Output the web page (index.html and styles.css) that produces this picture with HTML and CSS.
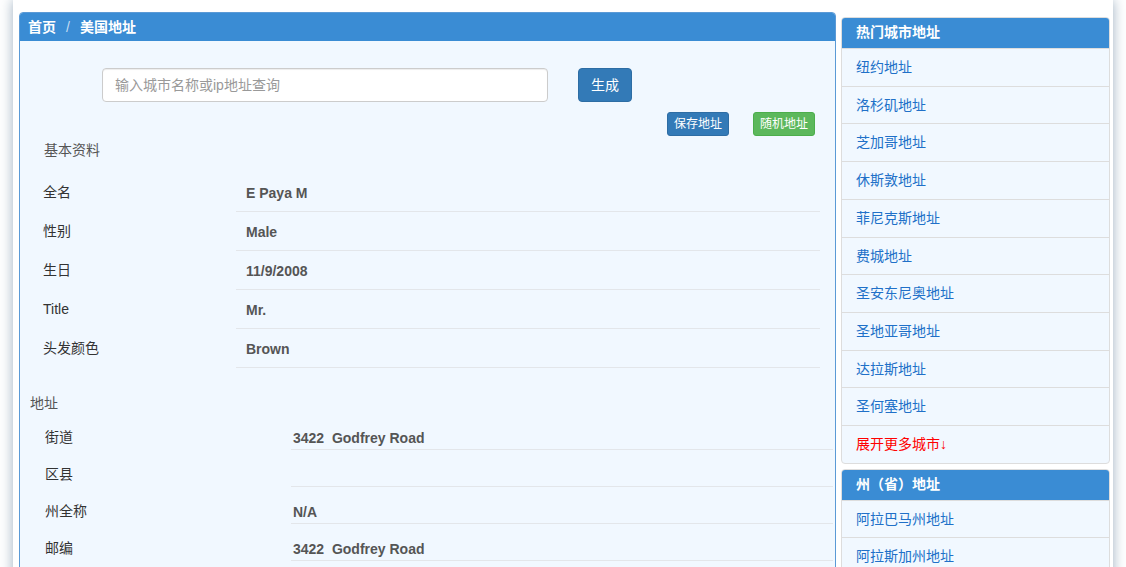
FILE: index.html
```html
<!DOCTYPE html>
<html lang="zh-CN">
<head>
<meta charset="utf-8">
<title>美国地址</title>
<link rel="stylesheet" href="styles.css">
</head>
<body>
<div class="page">
  <div class="main">
    <div class="panel">
      <div class="panel-head">
        <span class="crumb">首页</span><span class="sep">/</span><span class="crumb">美国地址</span>
      </div>
      <div class="panel-body">
        <div class="search-row">
          <input class="search-input" type="text" placeholder="输入城市名称或ip地址查询">
          <button class="btn btn-primary">生成</button>
        </div>
        <div class="action-row">
          <button class="btn-xs btn-blue">保存地址</button>
          <button class="btn-xs btn-green">随机地址</button>
        </div>
        <div class="section-title">基本资料</div>
        <div class="info-table">
          <div class="info-label">全名</div><div class="info-value">E Paya M</div>
          <div class="info-label">性别</div><div class="info-value">Male</div>
          <div class="info-label">生日</div><div class="info-value">11/9/2008</div>
          <div class="info-label">Title</div><div class="info-value">Mr.</div>
          <div class="info-label">头发颜色</div><div class="info-value">Brown</div>
        </div>
        <div class="section-title addr-title">地址</div>
        <div class="addr-table">
          <div class="addr-label">街道</div><div class="addr-value">3422&nbsp; Godfrey Road</div>
          <div class="addr-label">区县</div><div class="addr-value"></div>
          <div class="addr-label">州全称</div><div class="addr-value">N/A</div>
          <div class="addr-label">邮编</div><div class="addr-value">3422&nbsp; Godfrey Road</div>
        </div>
      </div>
    </div>
  </div>
  <div class="side">
    <div class="side-panel">
      <div class="side-head">热门城市地址</div>
      <ul class="side-list">
        <li><a href="#">纽约地址</a></li>
        <li><a href="#">洛杉矶地址</a></li>
        <li><a href="#">芝加哥地址</a></li>
        <li><a href="#">休斯敦地址</a></li>
        <li><a href="#">菲尼克斯地址</a></li>
        <li><a href="#">费城地址</a></li>
        <li><a href="#">圣安东尼奥地址</a></li>
        <li><a href="#">圣地亚哥地址</a></li>
        <li><a href="#">达拉斯地址</a></li>
        <li><a href="#">圣何塞地址</a></li>
        <li><a href="#" class="more">展开更多城市↓</a></li>
      </ul>
    </div>
    <div class="side-panel">
      <div class="side-head">州（省）地址</div>
      <ul class="side-list">
        <li><a href="#">阿拉巴马州地址</a></li>
        <li><a href="#">阿拉斯加州地址</a></li>
      </ul>
    </div>
  </div>
</div>
</body>
</html>
```

FILE: styles.css
```css
html {
  overflow: hidden;
}
body {
  margin: 0;
  background: #ffffff;
  font-family: "Liberation Sans", Arial, "Noto Sans CJK SC", sans-serif;
  font-size: 14px;
  line-height: 20px;
  color: #333;
}
.page {
  width: 1091px;
  margin: 0 auto;
  padding: 12px 3px 0 6px;
  display: flex;
  gap: 5px;
  background: #fff;
  box-shadow: 0 0 12px rgba(60, 95, 130, 0.5);
  min-height: 700px;
}
.main {
  width: 817px;
  flex: none;
}
.panel {
  border: 1px solid #5b9ad6;
  border-radius: 4px;
  background: #f1f8ff;
  overflow: hidden;
  min-height: 620px;
}
.panel-head {
  background: #3a8cd4;
  color: #fff;
  font-weight: bold;
  height: 28px;
  line-height: 28px;
  padding-left: 8px;
}
.sep {
  color: #c6dcf2;
  font-weight: normal;
  padding: 0 10px;
}
.search-row {
  display: flex;
  align-items: center;
  margin-top: 27px;
  padding-left: 82px;
}
.search-input {
  width: 446px;
  height: 34px;
  box-sizing: border-box;
  border: 1px solid #ccc;
  border-radius: 4px;
  padding: 6px 12px;
  font-family: inherit;
  font-size: 14px;
  color: #555;
  background: #fff;
  margin-right: 30px;
  box-shadow: inset 0 1px 1px rgba(0,0,0,.075);
}
.search-input::placeholder {
  color: #999;
}
.btn {
  height: 34px;
  padding: 6px 12px;
  border: 1px solid #2e6da4;
  border-radius: 4px;
  font-family: inherit;
  font-size: 14px;
  line-height: 20px;
  color: #fff;
  background: #337ab7;
}
.action-row {
  display: flex;
  justify-content: flex-end;
  gap: 24px;
  margin-top: 10px;
  padding-right: 20px;
}
.btn-xs {
  height: 24px;
  padding: 2px 6px;
  border-radius: 3px;
  font-family: inherit;
  font-size: 12px;
  line-height: 18px;
  color: #fff;
}
.btn-blue {
  background: #337ab7;
  border: 1px solid #2e6da4;
}
.btn-green {
  background: #5cb85c;
  border: 1px solid #4cae4c;
}
.section-title {
  color: #555;
  margin-top: 4px;
  padding-left: 24px;
}
.info-table {
  display: grid;
  grid-template-columns: 216px 584px;
  margin-top: 13px;
}
.info-label {
  padding: 9px 0 0 23px;
  color: #333;
}
.info-value {
  padding: 10px 0 8px 10px;
  border-bottom: 1px solid #e3e6ea;
  font-weight: bold;
  color: #555;
}
.addr-title {
  margin-top: 25px;
  padding-left: 10px;
}
.addr-table {
  display: grid;
  grid-template-columns: 271px 542px;
}
.addr-label {
  padding: 14px 0 0 25px;
  color: #333;
}
.addr-value {
  padding: 15px 0 1px 2px;
  min-height: 20px;
  border-bottom: 1px solid #e3e6ea;
  font-weight: bold;
  color: #555;
}
.side {
  width: 269px;
  flex: none;
  margin-top: 5px;
  display: flex;
  flex-direction: column;
  gap: 5px;
}
.side-panel {
  border: 1px solid #ddd;
  border-radius: 4px;
  background: #f1f8ff;
  overflow: hidden;
}
.side-head {
  background: #3a8cd4;
  color: #fff;
  font-weight: bold;
  height: 30px;
  line-height: 29px;
  padding: 0 14px;
  border-bottom: 1px solid #ddd;
}
.side-list {
  list-style: none;
  margin: 0;
  padding: 0;
}
.side-list li {
  padding: 9px 14px;
  line-height: 18.7px;
  border-bottom: 1px solid #ddd;
}
.side-list li:last-child {
  border-bottom: none;
}
.side-list a {
  color: #2070c8;
  text-decoration: none;
}
.side-list a.more {
  color: #ff0000;
}
```
